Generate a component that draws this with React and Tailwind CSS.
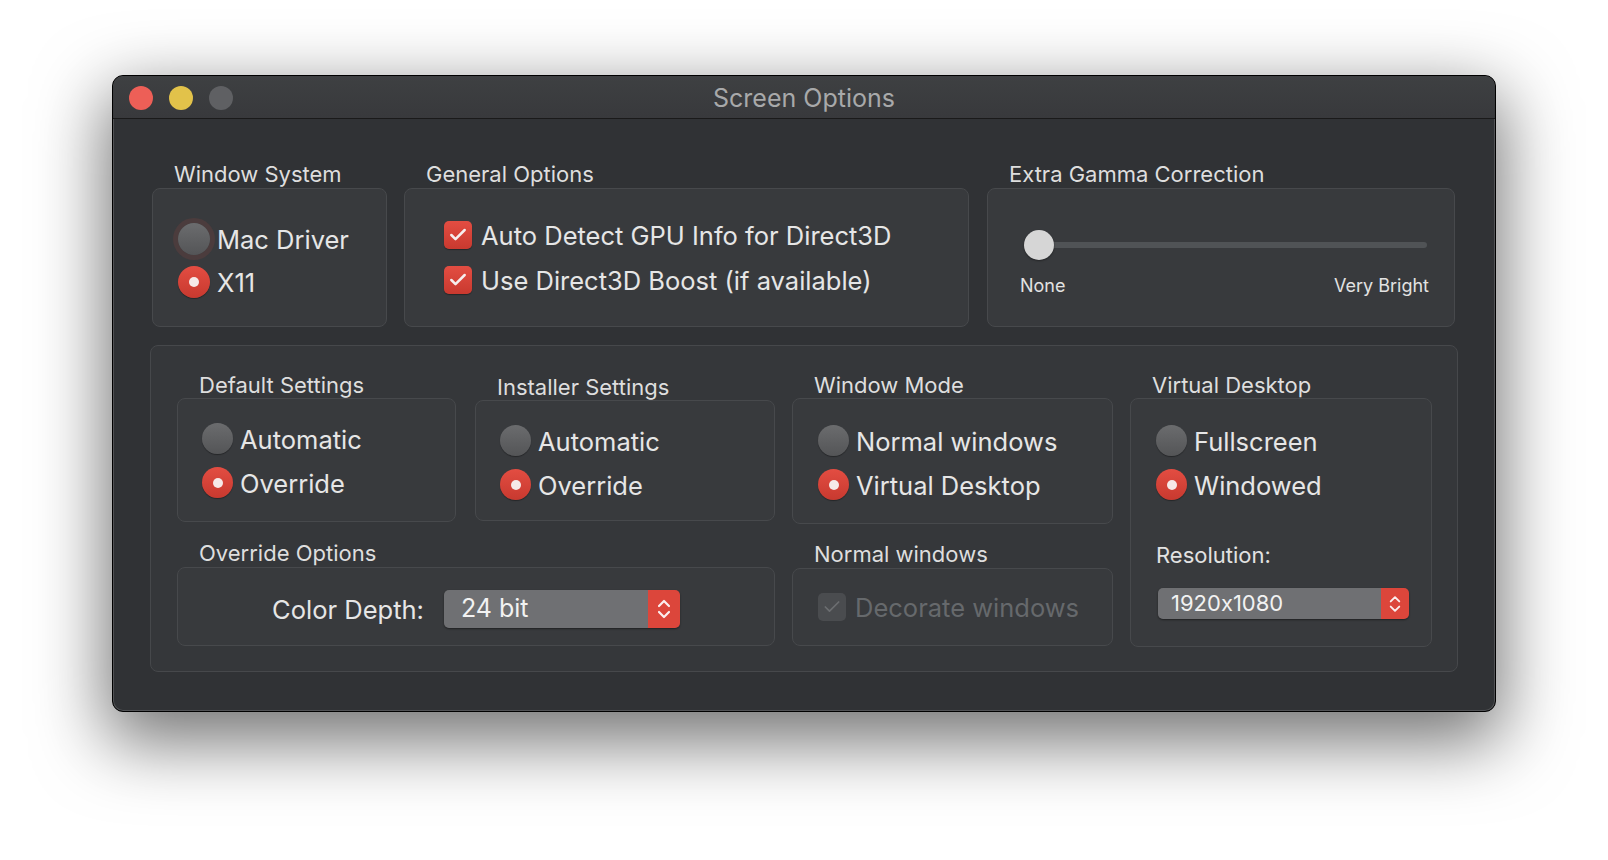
import { Check } from 'lucide-react'

const FONT = { fontFamily: 'Inter, "Noto Sans", sans-serif' }

function Radio({ checked, focused, size = 31 }) {
  const dim = size === 32 ? 'w-[32px] h-[32px]' : 'w-[31px] h-[31px]'
  if (checked) {
    return (
      <div className={`${dim} shrink-0 rounded-full bg-gradient-to-b from-[#e34d42] to-[#c8392f] shadow-[0_1px_1px_rgba(0,0,0,0.35)] flex items-center justify-center`}>
        <div className="w-[10px] h-[10px] rounded-full bg-[#f6e9e8]" />
      </div>
    )
  }
  return (
    <div
      className={`${dim} shrink-0 rounded-full bg-gradient-to-b from-[#6b6c6e] to-[#545557] ${
        focused ? 'shadow-[0_0_0_5px_#4b3c3d]' : 'shadow-[0_1px_1px_rgba(0,0,0,0.35)]'
      }`}
    />
  )
}

function RadioRow({ label, checked, focused, size }) {
  return (
    <div className="flex items-center gap-[7px] h-[31px]">
      <Radio checked={checked} focused={focused} size={size} />
      <span className="text-[25.5px] leading-[31px] text-[#e6e6e6] translate-y-[1px]">{label}</span>
    </div>
  )
}

function CheckRow({ label, disabled }) {
  return (
    <div className="flex items-center gap-[9px] h-[28px]">
      <div
        className={`w-[28px] h-[28px] shrink-0 rounded-[5px] flex items-center justify-center ${
          disabled ? 'bg-[#4a4c4f]' : 'bg-gradient-to-b from-[#e34d42] to-[#c9392f] shadow-[0_1px_1px_rgba(0,0,0,0.35)]'
        }`}
      >
        <Check size={20} strokeWidth={disabled ? 2 : 3} className={disabled ? 'text-[#6c6e71]' : 'text-[#f6eeee]'} />
      </div>
      <span className={`text-[25.5px] leading-[30px] translate-y-[1px] ${disabled ? 'text-[#66696c]' : 'text-[#e6e6e6]'}`}>{label}</span>
    </div>
  )
}

function Label({ children, className = '' }) {
  return (
    <div className={`h-[24px] text-[22px] leading-[24px] text-[#dedede] pl-[22px] ${className}`}>
      {children}
    </div>
  )
}

function Box({ className = '', children }) {
  return <div className={`rounded-[8px] border border-[#47494c] bg-[#383a3d] ${className}`}>{children}</div>
}

function Stepper({ big }) {
  return (
    <svg width={big ? 16 : 14} height={big ? 28 : 24} viewBox="0 0 16 28" fill="none" stroke="#fbeeee" strokeWidth="2.2" strokeLinecap="round" strokeLinejoin="round">
      <path d="M3 11 L8 6 L13 11" />
      <path d="M3 17 L8 22 L13 17" />
    </svg>
  )
}

function Select({ value, big }) {
  return (
    <div
      className={`flex rounded-[5px] overflow-hidden shadow-[0_1px_2px_rgba(0,0,0,0.45)] ${
        big ? 'w-[236px] h-[38px]' : 'w-[251px] h-[31px]'
      }`}
    >
      <div
        className={`flex-1 bg-[#6f7073] text-[#f2f2f2] flex items-center [font-feature-settings:'calt'_0] ${
          big ? 'text-[25px] pl-[17px]' : 'text-[22px] pl-[13px]'
        }`}
      >
        {value}
      </div>
      <div
        className={`bg-[#dc463b] flex items-center justify-center ${
          big ? 'w-[32px]' : 'w-[28px]'
        }`}
      >
        <Stepper big={big} />
      </div>
    </div>
  )
}

export default function App() {
  return (
    <div className="w-[1608px] h-[860px] bg-white overflow-hidden" style={FONT}>
      <div className="ml-[112px] mt-[75px] w-[1384px] h-[637px] rounded-[11px] border border-black bg-[#303235] shadow-[0_24px_70px_6px_rgba(0,0,0,0.55)] overflow-hidden">
        <div className="h-full rounded-[10px] shadow-[inset_0_0_0_1px_rgba(255,255,255,0.16)]">
          {/* title bar */}
          <div className="h-[43px] pt-[2px] flex items-center relative bg-gradient-to-b from-[#3e4042] to-[#38393c] border-b border-[#1a1a1a] rounded-t-[10px]">
            <div className="flex items-center gap-[16px] pl-[16px]">
              <div className="w-[24px] h-[24px] rounded-full bg-[#ed5f57]" />
              <div className="w-[24px] h-[24px] rounded-full bg-[#e2c24a]" />
              <div className="w-[24px] h-[24px] rounded-full bg-[#5f6063]" />
            </div>
            <div className="absolute inset-0 pt-[4px] flex items-center justify-center text-[25px] text-[#a8a9aa] pointer-events-none">
              Screen Options
            </div>
          </div>

          {/* content */}
          <div className="pt-[43px] px-[37px]">
            {/* top row */}
            <div className="flex mx-[2px] gap-[17px]">
              <div className="w-[235px]">
                <Label>Window System</Label>
                <Box className="mt-[2px] h-[139px] pt-[34px] pl-[25px] flex flex-col gap-[12px]">
                  <RadioRow label="Mac Driver" focused size={32} />
                  <RadioRow label="X11" checked size={32} />
                </Box>
              </div>
              <div className="w-[565px]">
                <Label>General Options</Label>
                <Box className="mt-[2px] h-[139px] pt-[32px] pl-[39px] flex flex-col gap-[17px]">
                  <CheckRow label="Auto Detect GPU Info for Direct3D" />
                  <CheckRow label="Use Direct3D Boost (if available)" />
                </Box>
              </div>
              <div className="w-[468px] ml-[1px]">
                <Label className="pl-[20px]">Extra Gamma Correction</Label>
                <Box className="mt-[2px] h-[139px] pt-[41px]">
                  <div className="ml-[36px] w-[403px] h-[30px] relative flex items-center">
                    <div className="ml-[15px] flex-1 h-[6px] rounded-full bg-[#505356]" />
                    <div className="absolute left-0 top-0 w-[30px] h-[30px] rounded-full bg-[#d6d6d6] shadow-[0_1px_2px_rgba(0,0,0,0.4)]" />
                  </div>
                  <div className="mt-[15px] pl-[32px] pr-[25px] flex justify-between text-[18px] leading-[22px] text-[#e2e2e2]">
                    <span>None</span>
                    <span>Very Bright</span>
                  </div>
                </Box>
              </div>
            </div>

            {/* bottom group */}
            <div className="mt-[18px] h-[327px] rounded-[8px] border border-[#46484b] bg-[#35373a] pt-[27px] pl-[26px] flex">
              <div className="w-[598px]">
                <div className="flex gap-[19px]">
                  <div className="w-[279px]">
                    <Label>Default Settings</Label>
                    <Box className="mt-[1px] h-[124px] pt-[24px] pl-[24px] flex flex-col gap-[13px]">
                      <RadioRow label="Automatic" />
                      <RadioRow label="Override" checked />
                    </Box>
                  </div>
                  <div className="w-[300px] mt-[2px]">
                    <Label>Installer Settings</Label>
                    <Box className="mt-[1px] h-[121px] pt-[24px] pl-[24px] flex flex-col gap-[13px]">
                      <RadioRow label="Automatic" />
                      <RadioRow label="Override" checked />
                    </Box>
                  </div>
                </div>
                <Label className="mt-[19px]">Override Options</Label>
                <Box className="mt-[2px] h-[79px] pt-[5px] flex items-center justify-center gap-[20px]">
                  <span className="text-[25.5px] text-[#e6e6e6] translate-y-[1px]">Color Depth:</span>
                  <Select value="24 bit" big />
                </Box>
              </div>

              <div className="w-[321px] ml-[17px]">
                <Label>Window Mode</Label>
                <Box className="mt-[1px] h-[126px] pt-[26px] pl-[25px] flex flex-col gap-[13px]">
                  <RadioRow label="Normal windows" />
                  <RadioRow label="Virtual Desktop" checked />
                </Box>
                <Label className="mt-[18px]">Normal windows</Label>
                <Box className="mt-[2px] h-[78px] pl-[25px] flex items-center">
                  <CheckRow label="Decorate windows" disabled />
                </Box>
              </div>

              <div className="w-[302px] ml-[17px]">
                <Label>Virtual Desktop</Label>
                <Box className="mt-[1px] h-[249px] pt-[26px] pl-[25px]">
                  <div className="flex flex-col gap-[13px]">
                    <RadioRow label="Fullscreen" />
                    <RadioRow label="Windowed" checked />
                  </div>
                  <div className="mt-[42px] text-[22px] leading-[26px] text-[#e2e2e2]">Resolution:</div>
                  <div className="mt-[20px] ml-[2px]">
                    <Select value="1920x1080" />
                  </div>
                </Box>
              </div>
            </div>
          </div>
        </div>
      </div>
    </div>
  )
}
